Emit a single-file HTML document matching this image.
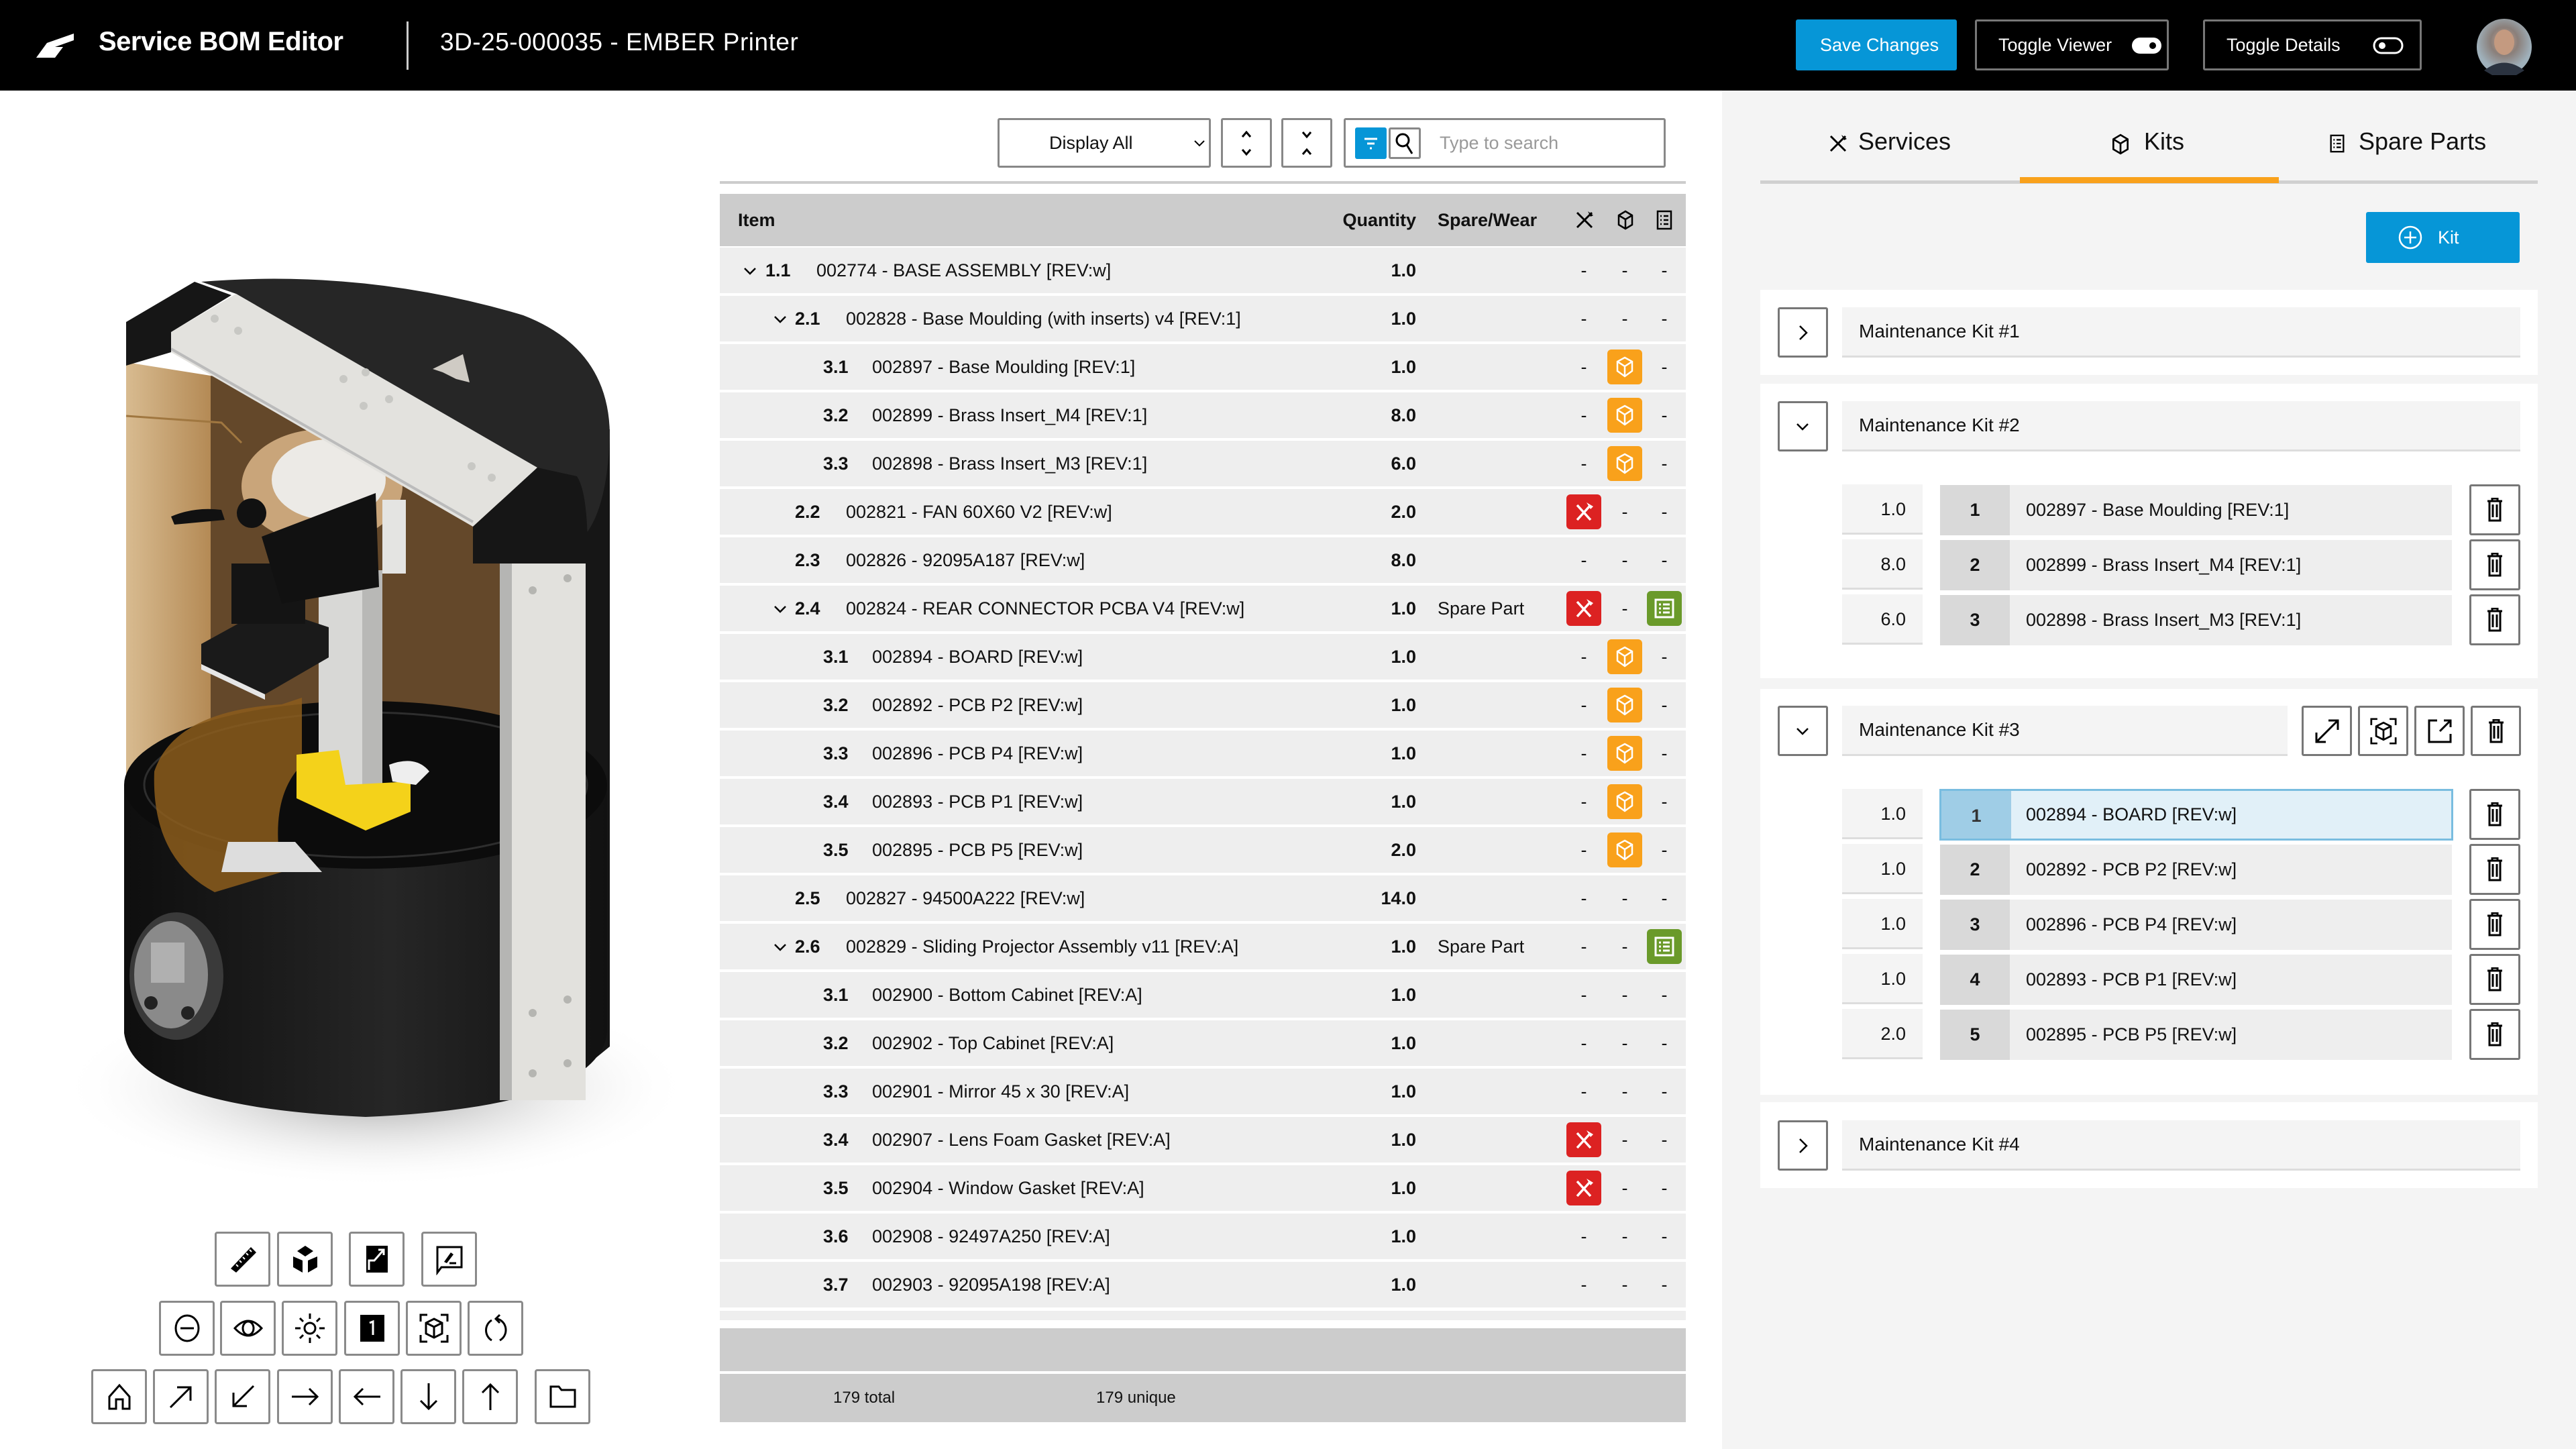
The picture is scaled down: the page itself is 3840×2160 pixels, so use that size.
<!DOCTYPE html>
<html><head><meta charset="utf-8">
<style>
*{box-sizing:border-box;margin:0;padding:0}
body{width:3840px;height:2160px;position:relative;overflow:hidden;background:#fff;font-family:"Liberation Sans",sans-serif;color:#111}
.abs{position:absolute}
#hdr{left:0;top:0;width:3840px;height:135px;background:#000;color:#fff}
.hbtn{position:absolute;top:29px;height:76px;border:3px solid #777;border-radius:3px;color:#fff;font-size:27px;line-height:70px;padding-left:32px}
.tb{position:absolute;width:83px;height:82px;border:3px solid #8a8a8a;border-radius:4px;background:#fff;display:flex;align-items:center;justify-content:center}
.row{position:absolute;left:1073px;width:1440px;height:68px;background:#eee;font-size:27px;line-height:68px}
.row span{position:absolute;top:0}
.num{font-weight:bold}
.qty{left:900px;width:138px;text-align:right;font-weight:bold}
.sp{left:1070px}
.d{width:52px;text-align:center}
.bd{position:absolute;top:8px;width:52px;height:52px;border-radius:6px;display:flex;align-items:center;justify-content:center}
.or{background:#f9a11b}.rd{background:#dc2222}.gr{background:#6a9a2a}
.card{position:absolute;left:2624px;width:1159px;background:#fff}
.chb{position:absolute;width:75px;height:75px;border:3px solid #777;border-radius:3px;background:#fff;display:flex;align-items:center;justify-content:center}
.nf{position:absolute;height:75px;background:#f4f4f4;border-bottom:3px solid #ddd;font-size:28px;line-height:72px;padding-left:25px}
.qb{position:absolute;width:120px;height:75px;background:#f4f4f4;border-bottom:3px solid #ddd;font-size:27px;line-height:75px;text-align:right;padding-right:25px}
.ib{position:absolute;height:75px;background:#eee;font-size:27px;line-height:75px}
.ib .n{position:absolute;left:0;top:0;width:104px;height:100%;background:#d9d9d9;text-align:center;font-weight:bold}
.ib .t{position:absolute;left:128px;top:0}
.sb{position:absolute;width:76px;height:76px;border:3px solid #777;border-radius:3px;background:#fff;display:flex;align-items:center;justify-content:center}
</style></head><body>

<div id="hdr" class="abs">
  <svg class="abs" style="left:54px;top:50px" width="56" height="36" viewBox="0 0 56 36"><path d="M0 36 L16 14 L56 0 L56 10 L28 20 L40 20 L28 36 Z" fill="#fff"/></svg>
  <div class="abs" style="left:147px;top:40px;font-size:40px;font-weight:bold;letter-spacing:-0.5px">Service BOM Editor</div>
  <div class="abs" style="left:606px;top:32px;width:3px;height:72px;background:#ccc"></div>
  <div class="abs" style="left:656px;top:42px;font-size:37px;letter-spacing:0.5px">3D-25-000035 - EMBER Printer</div>
  <div class="hbtn" style="left:2677px;width:240px;background:#0696d7;border-color:#0696d7;padding-left:33px">Save Changes</div>
  <div class="hbtn" style="left:2944px;width:289px">Toggle Viewer
    <svg class="abs" style="left:230px;top:23px" width="46" height="26"><rect x="1" y="1" width="44" height="24" rx="12" fill="#fff"/><circle cx="32" cy="13" r="5" fill="#000"/></svg></div>
  <div class="hbtn" style="left:3284px;width:326px">Toggle Details
    <svg class="abs" style="left:250px;top:23px" width="46" height="26"><rect x="2" y="2" width="42" height="22" rx="11" fill="none" stroke="#fff" stroke-width="3"/><circle cx="14" cy="13" r="5" fill="#fff"/></svg></div>
  <svg class="abs" style="left:3691px;top:27px" width="84" height="86"><defs><radialGradient id="av" cx="50%" cy="40%"><stop offset="0" stop-color="#c9a58f"/><stop offset="0.5" stop-color="#8a7f7a"/><stop offset="1" stop-color="#9fb0ba"/></radialGradient></defs><ellipse cx="42" cy="43" rx="41" ry="42" fill="url(#av)"/><path d="M12 78 Q42 55 72 78 L60 85 L24 85Z" fill="#2b3340"/><ellipse cx="42" cy="36" rx="15" ry="19" fill="#c49a80"/></svg>
</div>

<!-- printer -->
<svg class="abs" style="left:0;top:135px" width="1060" height="1650" viewBox="0 135 1060 1650">
  <defs>
    <radialGradient id="sh" cx="50%" cy="50%"><stop offset="0" stop-color="#999"/><stop offset="1" stop-color="#fff" stop-opacity="0"/></radialGradient>
    <linearGradient id="body" x1="0" x2="1"><stop offset="0" stop-color="#0e0e0e"/><stop offset="0.55" stop-color="#262626"/><stop offset="1" stop-color="#111"/></linearGradient>
    <linearGradient id="amb" x1="0" x2="1"><stop offset="0" stop-color="#d8bb90"/><stop offset="1" stop-color="#b48a55"/></linearGradient>
  </defs>
  <ellipse cx="560" cy="1620" rx="470" ry="150" fill="url(#sh)"/>
  <path d="M860 640 L909 640 L909 1560 L860 1600Z" fill="#161616"/>
  <!-- window -->
  <path d="M188 540 L188 1200 L314 1200 L314 560Z" fill="url(#amb)"/>
  <path d="M314 560 L745 640 L745 1100 L314 1100Z" fill="#64482a"/>
  <path d="M188 620 L330 630 L360 660" stroke="#a07740" stroke-width="3" fill="none"/>
  <!-- base -->
  <path d="M185 1170 L185 1540 Q200 1650 545 1665 Q890 1650 905 1540 L905 1170Z" fill="url(#body)"/>
  <ellipse cx="545" cy="1170" rx="360" ry="125" fill="#0c0c0c"/>
  <ellipse cx="545" cy="1170" rx="330" ry="108" fill="none" stroke="#2e2e2e" stroke-width="3"/>
  <!-- top cap -->
  <path d="M300 420 Q545 400 780 470 Q909 520 909 650 Q905 760 870 800 L800 700 L352 438Z" fill="#262626"/>
  <!-- resin plate -->
  <ellipse cx="480" cy="725" rx="120" ry="85" fill="#c9a57a"/>
  <ellipse cx="490" cy="715" rx="85" ry="60" fill="#eceae6"/>
  <!-- column -->
  <rect x="475" y="850" width="95" height="320" fill="#d8d8d6"/>
  <rect x="540" y="850" width="30" height="320" fill="#b8b8b6"/>
  <rect x="570" y="745" width="35" height="110" fill="#e4e4e2"/>
  <!-- head -->
  <path d="M300 960 L400 905 L490 935 L490 980 L395 1035 L300 990Z" fill="#1a1a1a"/>
  <path d="M300 990 L395 1035 L395 1043 L300 998Z" fill="#e6e6e6"/>
  <rect x="345" y="840" width="110" height="90" fill="#141414"/>
  <path d="M255 770 Q290 755 330 760 L335 775 L260 782Z" fill="#111"/>
  <circle cx="375" cy="765" r="22" fill="#111"/>
  <path d="M390 800 L560 735 L565 875 L420 900Z" fill="#111"/>
  <!-- vat -->
  <path d="M230 1150 Q260 1060 420 1050 L450 1040 L450 1140 Q400 1190 420 1300 L320 1330 Q225 1280 230 1150Z" fill="#8c5d1c" opacity="0.85"/>
  <path d="M340 1255 L440 1255 L480 1300 L330 1300Z" fill="#ddd"/>
  <!-- yellow -->
  <path d="M442 1125 L505 1118 L515 1170 L612 1165 L612 1210 L545 1238 L442 1190Z" fill="#f4d21a"/>
  <path d="M580 1140 Q620 1125 640 1150 L620 1170 L585 1165Z" fill="#eee"/>
  <!-- top bar -->
  <path d="M255 495 L352 438 L801 697 L705 785 L255 525Z" fill="#e3e2de"/>
  <path d="M255 520 L705 778" stroke="#bbb" stroke-width="4"/>
  <path d="M188 480 L290 420 L345 440 L255 495 L255 525 L188 545Z" fill="#161616"/>
  <path d="M705 785 L801 697 L860 710 Q880 740 875 870 L760 875 L745 840 L705 840Z" fill="#161616"/>
  <path d="M645 550 L690 528 L700 570 L680 565 L660 555Z" fill="#cfcbc4"/>
  <g fill="#c8c8c4"><circle cx="320" cy="475" r="6"/><circle cx="355" cy="493" r="6"/><circle cx="512" cy="565" r="6"/><circle cx="545" cy="555" r="6"/><circle cx="542" cy="605" r="6"/><circle cx="580" cy="595" r="6"/><circle cx="703" cy="695" r="6"/><circle cx="733" cy="712" r="6"/></g>
  <!-- pillar -->
  <rect x="745" y="840" width="128" height="800" fill="#e2e1dd"/>
  <rect x="745" y="840" width="18" height="800" fill="#b5b5b3"/>
  <g fill="#b5b5b1"><circle cx="794" cy="880" r="6"/><circle cx="846" cy="862" r="6"/><circle cx="794" cy="1510" r="6"/><circle cx="846" cy="1490" r="6"/><circle cx="794" cy="1600" r="6"/><circle cx="846" cy="1585" r="6"/></g>
  <!-- dial -->
  <ellipse cx="263" cy="1455" rx="70" ry="95" fill="#3a3a3a"/>
  <ellipse cx="255" cy="1453" rx="55" ry="80" fill="#8a8a8a"/>
  <rect x="225" y="1405" width="50" height="60" fill="#b0b0b0"/>
  <circle cx="225" cy="1495" r="10" fill="#222"/><circle cx="280" cy="1510" r="10" fill="#222"/>
</svg>

<!-- viewer toolbar -->
<div class="tb" style="left:320px;top:1836px"><svg width="48" height="48" viewBox="0 0 48 48"><path d="M6 38 L36 6 L44 14 L14 44Z" fill="#000"/><path d="M14 32l3 3M19 26l3 3M24 21l3 3M29 15l3 3M34 10l3 3" stroke="#fff" stroke-width="2"/></svg></div>
<div class="tb" style="left:413px;top:1836px"><svg width="48" height="48" viewBox="0 0 48 48"><path d="M24 4 L36 12 L24 20 L12 12Z M6 20 L20 26 L20 44 L6 36Z M42 20 L28 26 L28 44 L42 36Z" fill="#000"/></svg></div>
<div class="tb" style="left:520px;top:1836px"><svg width="40" height="48" viewBox="0 0 40 48"><rect x="4" y="4" width="32" height="40" fill="#000"/><path d="M8 40 V26 H16 L30 10" stroke="#fff" stroke-width="3" fill="none"/><path d="M22 10 H30 V18" stroke="#fff" stroke-width="3" fill="none"/></svg></div>
<div class="tb" style="left:628px;top:1836px"><svg width="44" height="48" viewBox="0 0 44 48"><path d="M4 6 H40 V36 H10 L4 44Z" fill="none" stroke="#000" stroke-width="3"/><path d="M14 28 L24 14 L28 17 L18 30Z" fill="#000"/><path d="M22 30 H32" stroke="#000" stroke-width="3"/></svg></div>

<div class="tb" style="left:237px;top:1939px"><svg width="44" height="44"><ellipse cx="22" cy="22" rx="17" ry="19" fill="none" stroke="#000" stroke-width="3"/><path d="M12 22 H32" stroke="#000" stroke-width="3"/></svg></div>
<div class="tb" style="left:328px;top:1939px"><svg width="48" height="44"><path d="M4 22 Q24 0 44 22 Q24 44 4 22Z" fill="none" stroke="#000" stroke-width="3"/><ellipse cx="24" cy="22" rx="8" ry="10" fill="none" stroke="#000" stroke-width="3"/></svg></div>
<div class="tb" style="left:420px;top:1939px"><svg width="48" height="48" viewBox="0 0 48 48"><circle cx="24" cy="24" r="8" fill="none" stroke="#000" stroke-width="3"/><path d="M24 2v8M24 38v8M2 24h8M38 24h8M9 9l5 5M34 34l5 5M39 9l-5 5M14 34l-5 5" stroke="#000" stroke-width="3"/></svg></div>
<div class="tb" style="left:513px;top:1939px"><svg width="36" height="40"><rect width="36" height="40" fill="#000"/><path d="M14 12 L19 10 V30" stroke="#fff" stroke-width="3" fill="none"/></svg></div>
<div class="tb" style="left:605px;top:1939px"><svg width="44" height="44" viewBox="0 0 44 44"><path d="M2 12V2h10M32 2h10v10M2 32v10h10M42 32v10H32" stroke="#000" stroke-width="3" fill="none"/><path d="M22 8 L34 14 V30 L22 36 L10 30 V14Z M10 14 L22 20 L34 14 M22 20 V36" stroke="#000" stroke-width="3" fill="none"/></svg></div>
<div class="tb" style="left:697px;top:1939px"><svg width="40" height="44" viewBox="0 0 40 44"><path d="M14 10 A16 17 0 0 0 14 40" stroke="#000" stroke-width="3" fill="none"/><path d="M26 40 A16 17 0 0 0 22 8" stroke="#000" stroke-width="3" fill="none"/><path d="M26 2 L20 8 L26 14" stroke="#000" stroke-width="3" fill="none"/></svg></div>

<div class="tb" style="left:136px;top:2041px"><svg width="34" height="40"><path d="M2 20 L17 3 L32 20 V38 H22 V24 H12 V38 H2Z" fill="none" stroke="#000" stroke-width="3"/></svg></div>
<div class="tb" style="left:228px;top:2041px"><svg width="40" height="40"><path d="M4 36 L34 6 M14 6 H34 V26" stroke="#000" stroke-width="3" fill="none"/></svg></div>
<div class="tb" style="left:320px;top:2041px"><svg width="40" height="40"><path d="M36 4 L6 34 M6 14 V34 H26" stroke="#000" stroke-width="3" fill="none"/></svg></div>
<div class="tb" style="left:413px;top:2041px"><svg width="44" height="32"><path d="M2 16 H40 M28 4 L40 16 L28 28" stroke="#000" stroke-width="3" fill="none"/></svg></div>
<div class="tb" style="left:505px;top:2041px"><svg width="44" height="32"><path d="M42 16 H4 M16 4 L4 16 L16 28" stroke="#000" stroke-width="3" fill="none"/></svg></div>
<div class="tb" style="left:597px;top:2041px"><svg width="32" height="44"><path d="M16 2 V40 M4 28 L16 40 L28 28" stroke="#000" stroke-width="3" fill="none"/></svg></div>
<div class="tb" style="left:689px;top:2041px"><svg width="32" height="44"><path d="M16 42 V4 M4 16 L16 4 L28 16" stroke="#000" stroke-width="3" fill="none"/></svg></div>
<div class="tb" style="left:797px;top:2041px"><svg width="40" height="34"><path d="M2 2 H14 L18 7 H38 V32 H2Z" fill="none" stroke="#000" stroke-width="3"/></svg></div>

<!-- table toolbar -->
<div class="abs" style="left:1487px;top:176px;width:318px;height:74px;border:3px solid #888;border-radius:3px;font-size:27px;line-height:68px;padding-left:74px">Display All
  <svg class="abs" style="left:290px;top:30px" width="16" height="10"><path d="M1 1 L8 8 L15 1" stroke="#000" stroke-width="2" fill="none"/></svg></div>
<div class="abs" style="left:1820px;top:176px;width:76px;height:74px;border:3px solid #888;border-radius:3px"><svg class="abs" style="left:27px;top:16px" width="16" height="38"><path d="M2 9 L8 2 L14 9 M2 28 L8 35 L14 28" stroke="#000" stroke-width="3" fill="none"/></svg></div>
<div class="abs" style="left:1910px;top:176px;width:76px;height:74px;border:3px solid #888;border-radius:3px"><svg class="abs" style="left:27px;top:16px" width="16" height="38"><path d="M2 2 L8 9 L14 2 M2 35 L8 28 L14 35" stroke="#000" stroke-width="3" fill="none"/></svg></div>
<div class="abs" style="left:2003px;top:176px;width:480px;height:74px;border:3px solid #888;border-radius:3px">
  <div class="abs" style="left:14px;top:11px;width:47px;height:47px;background:#0696d7;border-radius:3px"><svg width="47" height="47"><path d="M14 17 H33 M18 24 H29 M22 31 H25" stroke="#fff" stroke-width="3"/></svg></div>
  <div class="abs" style="left:64px;top:11px;width:48px;height:47px;border:3px solid #888;border-radius:3px"><svg width="42" height="41"><circle cx="18" cy="16" r="9" fill="none" stroke="#000" stroke-width="3"/><path d="M24 23 L32 36" stroke="#000" stroke-width="3"/></svg></div>
  <div class="abs" style="left:140px;top:0;font-size:27px;line-height:68px;color:#999">Type to search</div>
</div>
<div class="abs" style="left:1073px;top:270px;width:1440px;height:4px;background:#ccc"></div>

<!-- table header -->
<div class="abs" style="left:1073px;top:289px;width:1440px;height:78px;background:#ccc;font-size:27px;font-weight:bold;line-height:78px">
  <span class="abs" style="left:27px">Item</span>
  <span class="abs" style="left:900px;width:138px;text-align:right">Quantity</span>
  <span class="abs" style="left:1070px">Spare/Wear</span>
  <svg class="abs" style="left:1274px;top:24px" width="30" height="30" viewBox="0 0 30 30"><path d="M4 4 L26 26 M26 4 L4 26" stroke="#000" stroke-width="3"/><path d="M20 2 L28 8 L24 10Z" fill="#000"/></svg>
  <svg class="abs" style="left:1338px;top:24px" width="24" height="30" viewBox="0 0 24 30"><path d="M12 2 L22 8 V22 L12 28 L2 22 V8Z M2 8 L12 14 L22 8 M12 14 V28" stroke="#000" stroke-width="2.5" fill="none"/></svg>
  <svg class="abs" style="left:1396px;top:24px" width="24" height="30" viewBox="0 0 24 30"><rect x="2" y="2" width="20" height="26" fill="none" stroke="#000" stroke-width="2.5"/><path d="M6 9h2M11 9h7M6 15h2M11 15h7M6 21h2M11 21h7" stroke="#000" stroke-width="2.5"/></svg>
</div>

<!-- icon defs -->
<svg width="0" height="0" style="position:absolute">
  <defs>
    <g id="cube"><path d="M14 2 L25 8 V22 L14 30 L3 22 V8Z M3 8 L14 15 L25 8 M14 15 V30" stroke="#fff" stroke-width="2.5" fill="none"/></g>
    <g id="tools"><path d="M6 6 L26 28 M26 6 L6 28" stroke="#fff" stroke-width="3.5"/><path d="M20 2 L30 8 L26 12Z" fill="#fff"/></g>
    <g id="list"><rect x="3" y="3" width="26" height="26" fill="none" stroke="#fff" stroke-width="3"/><path d="M8 10h3M14 10h10M8 16h3M14 16h10M8 22h3M14 22h10" stroke="#fff" stroke-width="3"/></g>
    <g id="chd"><path d="M2 3 L10 11 L18 3" stroke="#000" stroke-width="2.5" fill="none"/></g>
  </defs>
</svg>

<div class="row" style="top:369px"><svg class="abs" style="left:35px;top:28px" width="20" height="14"><use href="#chd"/></svg><span class="num" style="left:68px">1.1</span><span style="left:144px">002774 - BASE ASSEMBLY [REV:w]</span><span class="qty">1.0</span><span class="d" style="left:1262px">-</span><span class="d" style="left:1323px">-</span><span class="d" style="left:1382px">-</span></div>
<div class="row" style="top:441px"><svg class="abs" style="left:80px;top:28px" width="20" height="14"><use href="#chd"/></svg><span class="num" style="left:112px">2.1</span><span style="left:188px">002828 - Base Moulding (with inserts) v4 [REV:1]</span><span class="qty">1.0</span><span class="d" style="left:1262px">-</span><span class="d" style="left:1323px">-</span><span class="d" style="left:1382px">-</span></div>
<div class="row" style="top:513px"><span class="num" style="left:154px">3.1</span><span style="left:227px">002897 - Base Moulding [REV:1]</span><span class="qty">1.0</span><span class="d" style="left:1262px">-</span><div class="bd or" style="left:1323px"><svg width="28" height="32"><use href="#cube"/></svg></div><span class="d" style="left:1382px">-</span></div>
<div class="row" style="top:585px"><span class="num" style="left:154px">3.2</span><span style="left:227px">002899 - Brass Insert_M4 [REV:1]</span><span class="qty">8.0</span><span class="d" style="left:1262px">-</span><div class="bd or" style="left:1323px"><svg width="28" height="32"><use href="#cube"/></svg></div><span class="d" style="left:1382px">-</span></div>
<div class="row" style="top:657px"><span class="num" style="left:154px">3.3</span><span style="left:227px">002898 - Brass Insert_M3 [REV:1]</span><span class="qty">6.0</span><span class="d" style="left:1262px">-</span><div class="bd or" style="left:1323px"><svg width="28" height="32"><use href="#cube"/></svg></div><span class="d" style="left:1382px">-</span></div>
<div class="row" style="top:729px"><span class="num" style="left:112px">2.2</span><span style="left:188px">002821 - FAN 60X60 V2 [REV:w]</span><span class="qty">2.0</span><div class="bd rd" style="left:1262px"><svg width="32" height="32"><use href="#tools"/></svg></div><span class="d" style="left:1323px">-</span><span class="d" style="left:1382px">-</span></div>
<div class="row" style="top:801px"><span class="num" style="left:112px">2.3</span><span style="left:188px">002826 - 92095A187 [REV:w]</span><span class="qty">8.0</span><span class="d" style="left:1262px">-</span><span class="d" style="left:1323px">-</span><span class="d" style="left:1382px">-</span></div>
<div class="row" style="top:873px"><svg class="abs" style="left:80px;top:28px" width="20" height="14"><use href="#chd"/></svg><span class="num" style="left:112px">2.4</span><span style="left:188px">002824 - REAR CONNECTOR PCBA V4 [REV:w]</span><span class="qty">1.0</span><span class="sp">Spare Part</span><div class="bd rd" style="left:1262px"><svg width="32" height="32"><use href="#tools"/></svg></div><span class="d" style="left:1323px">-</span><div class="bd gr" style="left:1382px"><svg width="32" height="32"><use href="#list"/></svg></div></div>
<div class="row" style="top:945px"><span class="num" style="left:154px">3.1</span><span style="left:227px">002894 - BOARD [REV:w]</span><span class="qty">1.0</span><span class="d" style="left:1262px">-</span><div class="bd or" style="left:1323px"><svg width="28" height="32"><use href="#cube"/></svg></div><span class="d" style="left:1382px">-</span></div>
<div class="row" style="top:1017px"><span class="num" style="left:154px">3.2</span><span style="left:227px">002892 - PCB P2 [REV:w]</span><span class="qty">1.0</span><span class="d" style="left:1262px">-</span><div class="bd or" style="left:1323px"><svg width="28" height="32"><use href="#cube"/></svg></div><span class="d" style="left:1382px">-</span></div>
<div class="row" style="top:1089px"><span class="num" style="left:154px">3.3</span><span style="left:227px">002896 - PCB P4 [REV:w]</span><span class="qty">1.0</span><span class="d" style="left:1262px">-</span><div class="bd or" style="left:1323px"><svg width="28" height="32"><use href="#cube"/></svg></div><span class="d" style="left:1382px">-</span></div>
<div class="row" style="top:1161px"><span class="num" style="left:154px">3.4</span><span style="left:227px">002893 - PCB P1 [REV:w]</span><span class="qty">1.0</span><span class="d" style="left:1262px">-</span><div class="bd or" style="left:1323px"><svg width="28" height="32"><use href="#cube"/></svg></div><span class="d" style="left:1382px">-</span></div>
<div class="row" style="top:1233px"><span class="num" style="left:154px">3.5</span><span style="left:227px">002895 - PCB P5 [REV:w]</span><span class="qty">2.0</span><span class="d" style="left:1262px">-</span><div class="bd or" style="left:1323px"><svg width="28" height="32"><use href="#cube"/></svg></div><span class="d" style="left:1382px">-</span></div>
<div class="row" style="top:1305px"><span class="num" style="left:112px">2.5</span><span style="left:188px">002827 - 94500A222 [REV:w]</span><span class="qty">14.0</span><span class="d" style="left:1262px">-</span><span class="d" style="left:1323px">-</span><span class="d" style="left:1382px">-</span></div>
<div class="row" style="top:1377px"><svg class="abs" style="left:80px;top:28px" width="20" height="14"><use href="#chd"/></svg><span class="num" style="left:112px">2.6</span><span style="left:188px">002829 - Sliding Projector Assembly v11 [REV:A]</span><span class="qty">1.0</span><span class="sp">Spare Part</span><span class="d" style="left:1262px">-</span><span class="d" style="left:1323px">-</span><div class="bd gr" style="left:1382px"><svg width="32" height="32"><use href="#list"/></svg></div></div>
<div class="row" style="top:1449px"><span class="num" style="left:154px">3.1</span><span style="left:227px">002900 - Bottom Cabinet [REV:A]</span><span class="qty">1.0</span><span class="d" style="left:1262px">-</span><span class="d" style="left:1323px">-</span><span class="d" style="left:1382px">-</span></div>
<div class="row" style="top:1521px"><span class="num" style="left:154px">3.2</span><span style="left:227px">002902 - Top Cabinet [REV:A]</span><span class="qty">1.0</span><span class="d" style="left:1262px">-</span><span class="d" style="left:1323px">-</span><span class="d" style="left:1382px">-</span></div>
<div class="row" style="top:1593px"><span class="num" style="left:154px">3.3</span><span style="left:227px">002901 - Mirror 45 x 30 [REV:A]</span><span class="qty">1.0</span><span class="d" style="left:1262px">-</span><span class="d" style="left:1323px">-</span><span class="d" style="left:1382px">-</span></div>
<div class="row" style="top:1665px"><span class="num" style="left:154px">3.4</span><span style="left:227px">002907 - Lens Foam Gasket [REV:A]</span><span class="qty">1.0</span><div class="bd rd" style="left:1262px"><svg width="32" height="32"><use href="#tools"/></svg></div><span class="d" style="left:1323px">-</span><span class="d" style="left:1382px">-</span></div>
<div class="row" style="top:1737px"><span class="num" style="left:154px">3.5</span><span style="left:227px">002904 - Window Gasket [REV:A]</span><span class="qty">1.0</span><div class="bd rd" style="left:1262px"><svg width="32" height="32"><use href="#tools"/></svg></div><span class="d" style="left:1323px">-</span><span class="d" style="left:1382px">-</span></div>
<div class="row" style="top:1809px"><span class="num" style="left:154px">3.6</span><span style="left:227px">002908 - 92497A250 [REV:A]</span><span class="qty">1.0</span><span class="d" style="left:1262px">-</span><span class="d" style="left:1323px">-</span><span class="d" style="left:1382px">-</span></div>
<div class="row" style="top:1881px"><span class="num" style="left:154px">3.7</span><span style="left:227px">002903 - 92095A198 [REV:A]</span><span class="qty">1.0</span><span class="d" style="left:1262px">-</span><span class="d" style="left:1323px">-</span><span class="d" style="left:1382px">-</span></div>
<div class="abs" style="left:1073px;top:1954px;width:1440px;height:14px;background:#eee"></div>
<div class="abs" style="left:1073px;top:1980px;width:1440px;height:64px;background:#ccc"></div>
<div class="abs" style="left:1073px;top:2048px;width:1440px;height:72px;background:#ccc;font-size:24px;line-height:72px">
  <span class="abs" style="left:169px">179 total</span><span class="abs" style="left:561px">179 unique</span></div>

<!-- right panel -->
<div class="abs" style="left:2567px;top:135px;width:1273px;height:2025px;background:#f4f4f4"></div>
<div class="abs" style="left:2624px;top:269px;width:1159px;height:5px;background:#d0d0d0"></div>
<div class="abs" style="left:3011px;top:264px;width:386px;height:9px;background:#f9a11b"></div>
<svg class="abs" style="left:2725px;top:198px" width="30" height="32" viewBox="0 0 30 30"><path d="M4 4 L26 26 M26 4 L4 26" stroke="#000" stroke-width="3"/><path d="M20 2 L28 8 L24 10Z" fill="#000"/></svg>
<div class="abs" style="left:2770px;top:190px;font-size:36px">Services</div>
<svg class="abs" style="left:3148px;top:199px" width="26" height="32" viewBox="0 0 24 30"><path d="M12 2 L22 8 V22 L12 28 L2 22 V8Z M2 8 L12 14 L22 8 M12 14 V28" stroke="#000" stroke-width="2.5" fill="none"/></svg>
<div class="abs" style="left:3196px;top:190px;font-size:36px">Kits</div>
<svg class="abs" style="left:3472px;top:200px" width="24" height="28" viewBox="0 0 24 30"><rect x="2" y="2" width="20" height="26" fill="none" stroke="#000" stroke-width="2.5"/><path d="M6 9h2M11 9h7M6 15h2M11 15h7M6 21h2M11 21h7" stroke="#000" stroke-width="2.5"/></svg>
<div class="abs" style="left:3516px;top:190px;font-size:36px">Spare Parts</div>

<div class="abs" style="left:3527px;top:316px;width:229px;height:76px;background:#0696d7;border-radius:3px;color:#fff;font-size:27px;line-height:76px">
  <svg class="abs" style="left:48px;top:20px" width="36" height="36"><circle cx="18" cy="18" r="16" fill="none" stroke="#fff" stroke-width="2.5"/><path d="M18 9 V27 M9 18 H27" stroke="#fff" stroke-width="2.5"/></svg>
  <span class="abs" style="left:107px">Kit</span></div>

<!-- card 1 -->
<div class="card" style="top:432px;height:127px"></div>
<div class="chb" style="left:2650px;top:458px"><svg width="14" height="24"><path d="M2 2 L12 12 L2 22" stroke="#000" stroke-width="2.5" fill="none"/></svg></div>
<div class="nf" style="left:2746px;top:458px;width:1011px">Maintenance Kit #1</div>

<!-- card 2 -->
<div class="card" style="top:572px;height:439px"></div>
<div class="chb" style="left:2650px;top:598px"><svg width="22" height="14"><use href="#chd"/></svg></div>
<div class="nf" style="left:2746px;top:598px;width:1011px">Maintenance Kit #2</div>
<div class="qb" style="left:2746px;top:722px">1.0</div>
<div class="ib" style="left:2892px;top:723px;width:763px"><span class="n">1</span><span class="t">002897 - Base Moulding [REV:1]</span></div>
<div class="sb" style="left:3681px;top:722px"><svg width="26" height="36"><path d="M2 5 H24 M9 5 V1 H17 V5 M5 5 V34 H21 V5 M10 10 V29 M16 10 V29" stroke="#000" stroke-width="3" fill="none"/></svg></div>
<div class="qb" style="left:2746px;top:804px">8.0</div>
<div class="ib" style="left:2892px;top:805px;width:763px"><span class="n">2</span><span class="t">002899 - Brass Insert_M4 [REV:1]</span></div>
<div class="sb" style="left:3681px;top:804px"><svg width="26" height="36"><path d="M2 5 H24 M9 5 V1 H17 V5 M5 5 V34 H21 V5 M10 10 V29 M16 10 V29" stroke="#000" stroke-width="3" fill="none"/></svg></div>
<div class="qb" style="left:2746px;top:886px">6.0</div>
<div class="ib" style="left:2892px;top:887px;width:763px"><span class="n">3</span><span class="t">002898 - Brass Insert_M3 [REV:1]</span></div>
<div class="sb" style="left:3681px;top:886px"><svg width="26" height="36"><path d="M2 5 H24 M9 5 V1 H17 V5 M5 5 V34 H21 V5 M10 10 V29 M16 10 V29" stroke="#000" stroke-width="3" fill="none"/></svg></div>

<!-- card 3 -->
<div class="card" style="top:1027px;height:605px"></div>
<div class="chb" style="left:2650px;top:1052px"><svg width="22" height="14"><use href="#chd"/></svg></div>
<div class="nf" style="left:2746px;top:1052px;width:664px">Maintenance Kit #3</div>
<div class="sb" style="left:3431px;top:1052px;width:75px;height:75px"><svg width="40" height="40"><path d="M4 36 L36 4 M22 4 H36 V18 M4 22 V36 H18" stroke="#000" stroke-width="3" fill="none"/></svg></div>
<div class="sb" style="left:3515px;top:1052px;width:75px;height:75px"><svg width="40" height="44" viewBox="0 0 44 44"><path d="M2 12V2h10M32 2h10v10M2 32v10h10M42 32v10H32" stroke="#000" stroke-width="3" fill="none"/><path d="M22 8 L34 14 V30 L22 36 L10 30 V14Z M10 14 L22 20 L34 14 M22 20 V36" stroke="#000" stroke-width="3" fill="none"/></svg></div>
<div class="sb" style="left:3599px;top:1052px;width:75px;height:75px"><svg width="40" height="40"><path d="M16 4 H4 V36 H36 V24 M20 20 L36 4 M26 4 H36 V14" stroke="#000" stroke-width="3" fill="none"/></svg></div>
<div class="sb" style="left:3683px;top:1052px;width:75px;height:75px"><svg width="26" height="36"><path d="M2 5 H24 M9 5 V1 H17 V5 M5 5 V34 H21 V5 M10 10 V29 M16 10 V29" stroke="#000" stroke-width="3" fill="none"/></svg></div>

<div class="qb" style="left:2746px;top:1176px">1.0</div>
<div class="ib" style="left:2891px;top:1176px;width:766px;height:77px;background:#e1f0f8;border:3px solid #79bde0"><span class="n" style="background:#9fcde6;color:#333">1</span><span class="t" style="left:126px;line-height:71px">002894 - BOARD [REV:w]</span></div>
<div class="sb" style="left:3681px;top:1176px"><svg width="26" height="36"><path d="M2 5 H24 M9 5 V1 H17 V5 M5 5 V34 H21 V5 M10 10 V29 M16 10 V29" stroke="#000" stroke-width="3" fill="none"/></svg></div>
<div class="qb" style="left:2746px;top:1258px">1.0</div>
<div class="ib" style="left:2892px;top:1259px;width:763px"><span class="n">2</span><span class="t">002892 - PCB P2 [REV:w]</span></div>
<div class="sb" style="left:3681px;top:1258px"><svg width="26" height="36"><path d="M2 5 H24 M9 5 V1 H17 V5 M5 5 V34 H21 V5 M10 10 V29 M16 10 V29" stroke="#000" stroke-width="3" fill="none"/></svg></div>
<div class="qb" style="left:2746px;top:1340px">1.0</div>
<div class="ib" style="left:2892px;top:1341px;width:763px"><span class="n">3</span><span class="t">002896 - PCB P4 [REV:w]</span></div>
<div class="sb" style="left:3681px;top:1340px"><svg width="26" height="36"><path d="M2 5 H24 M9 5 V1 H17 V5 M5 5 V34 H21 V5 M10 10 V29 M16 10 V29" stroke="#000" stroke-width="3" fill="none"/></svg></div>
<div class="qb" style="left:2746px;top:1422px">1.0</div>
<div class="ib" style="left:2892px;top:1423px;width:763px"><span class="n">4</span><span class="t">002893 - PCB P1 [REV:w]</span></div>
<div class="sb" style="left:3681px;top:1422px"><svg width="26" height="36"><path d="M2 5 H24 M9 5 V1 H17 V5 M5 5 V34 H21 V5 M10 10 V29 M16 10 V29" stroke="#000" stroke-width="3" fill="none"/></svg></div>
<div class="qb" style="left:2746px;top:1504px">2.0</div>
<div class="ib" style="left:2892px;top:1505px;width:763px"><span class="n">5</span><span class="t">002895 - PCB P5 [REV:w]</span></div>
<div class="sb" style="left:3681px;top:1504px"><svg width="26" height="36"><path d="M2 5 H24 M9 5 V1 H17 V5 M5 5 V34 H21 V5 M10 10 V29 M16 10 V29" stroke="#000" stroke-width="3" fill="none"/></svg></div>

<!-- card 4 -->
<div class="card" style="top:1643px;height:128px"></div>
<div class="chb" style="left:2650px;top:1670px"><svg width="14" height="24"><path d="M2 2 L12 12 L2 22" stroke="#000" stroke-width="2.5" fill="none"/></svg></div>
<div class="nf" style="left:2746px;top:1670px;width:1011px">Maintenance Kit #4</div>

</body></html>
